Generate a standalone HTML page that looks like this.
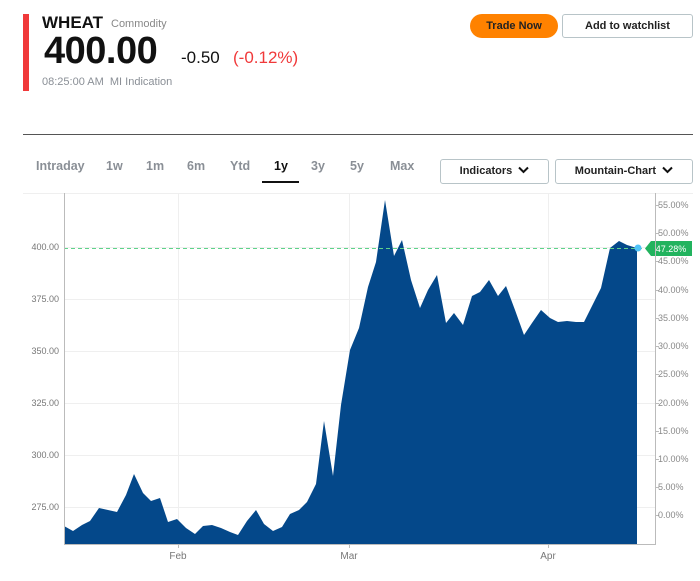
<!DOCTYPE html>
<html><head><style>
body{margin:0;width:700px;height:581px;background:#fff;font-family:"Liberation Sans",sans-serif;position:relative;overflow:hidden}
.a{position:absolute;white-space:nowrap}
.btn{position:absolute;box-sizing:border-box;font-size:11px;font-weight:bold;color:#222;text-align:center}
.tab{position:absolute;top:159px;font-size:12.5px;font-weight:bold;color:#8a8f96}
</style></head><body>
<div class="a" style="left:23px;top:14px;width:6px;height:77px;background:#f0393a"></div>
<div class="a" style="left:42px;top:13px;font-size:17px;font-weight:bold;color:#111">WHEAT</div>
<div class="a" style="left:111px;top:18px;font-size:11px;color:#888">Commodity</div>
<div class="a" style="left:44px;top:30px;font-size:38px;font-weight:bold;color:#111;letter-spacing:-0.5px">400.00</div>
<div class="a" style="left:181px;top:48px;font-size:17px;color:#111">-0.50</div>
<div class="a" style="left:233px;top:48px;font-size:17px;color:#f0393a">(-0.12%)</div>
<div class="a" style="left:42px;top:76px;font-size:11px;color:#8a8f96">08:25:00 AM&nbsp;&nbsp;MI Indication</div>
<div class="btn" style="left:470px;top:14px;width:88px;height:24px;border-radius:12px;background:#ff8200;line-height:24px">Trade Now</div>
<div class="btn" style="left:562px;top:14px;width:131px;height:24px;border:1px solid #b8c4c8;border-radius:3px;line-height:22px">Add to watchlist</div>
<div class="a" style="left:23px;top:134px;width:670px;height:1px;background:#555"></div>
<div class="tab" style="left:36px">Intraday</div>
<div class="tab" style="left:106px">1w</div>
<div class="tab" style="left:146px">1m</div>
<div class="tab" style="left:187px">6m</div>
<div class="tab" style="left:230px">Ytd</div>
<div class="tab" style="left:274px;color:#111">1y</div>
<div class="a" style="left:262px;top:181px;width:37px;height:2px;background:#111"></div>
<div class="tab" style="left:311px">3y</div>
<div class="tab" style="left:350px">5y</div>
<div class="tab" style="left:390px">Max</div>
<div class="btn" style="left:440px;top:159px;width:109px;height:25px;border:1px solid #b8c4c8;border-radius:3px;line-height:23px">Indicators &nbsp;<svg width="11" height="8" viewBox="0 0 11 8"><path d="M1 1.5L5.5 6 10 1.5" stroke="#111" stroke-width="2" fill="none"/></svg></div>
<div class="btn" style="left:555px;top:159px;width:138px;height:25px;border:1px solid #b8c4c8;border-radius:3px;line-height:23px">Mountain-Chart &nbsp;<svg width="11" height="8" viewBox="0 0 11 8"><path d="M1 1.5L5.5 6 10 1.5" stroke="#111" stroke-width="2" fill="none"/></svg></div>
<svg class="a" style="left:0;top:0" width="700" height="581">
<g stroke="#efefef" stroke-width="1">
<line x1="23" y1="193.5" x2="693" y2="193.5"/>
<line x1="64" y1="247.5" x2="655" y2="247.5"/><line x1="64" y1="299.5" x2="655" y2="299.5"/><line x1="64" y1="351.5" x2="655" y2="351.5"/><line x1="64" y1="403.5" x2="655" y2="403.5"/><line x1="64" y1="455.5" x2="655" y2="455.5"/><line x1="64" y1="507.5" x2="655" y2="507.5"/>
<line x1="178.5" y1="193" x2="178.5" y2="544"/><line x1="349.5" y1="193" x2="349.5" y2="544"/><line x1="548.5" y1="193" x2="548.5" y2="544"/>
</g>
<polygon fill="#04488a" points="64,544 64,526 73,531 82,525 90,521 99,508 108,510 117,512 126,495 134,474 143,493 151,501 160,498 168,522 177,519 186,528 195,534 203,526 212,525 221,528 230,532 238,535 247,521 256,510 264,524 273,531 282,527 290,514 299,510 307,502 316,484 324,421 333,476 341,405 350,350 359,328 368,287 376,262 385,200 394,256 402,240 411,280 420,308 428,290 437,275 446,323 454,313 463,325 472,296 480,292 489,280 498,296 506,286 515,310 524,335 532,323 541,310 550,318 558,322 567,321 576,322 584,322 593,304 601,288 610,248 619,241 627,245 637,248 637,544"/>
<line x1="64" y1="248.5" x2="645" y2="248.5" stroke="#5fd38a" stroke-dasharray="4,3"/>
<circle cx="638" cy="248" r="3.5" fill="#4fc3f7"/>
<polygon points="645,248.5 651,241 692,241 692,256 651,256" fill="#22b35e"/>
<text x="671" y="252" font-size="9" fill="#fff" text-anchor="middle" font-family="Liberation Sans">47.28%</text>
<line x1="64.5" y1="193" x2="64.5" y2="545" stroke="#bbb"/>
<line x1="655.5" y1="193" x2="655.5" y2="545" stroke="#bbb"/>
<line x1="64" y1="544.5" x2="656" y2="544.5" stroke="#bbb"/>
<g stroke="#bbb"><line x1="655" y1="205.5" x2="659" y2="205.5"/><line x1="655" y1="233.5" x2="659" y2="233.5"/><line x1="655" y1="261.5" x2="659" y2="261.5"/><line x1="655" y1="290.5" x2="659" y2="290.5"/><line x1="655" y1="318.5" x2="659" y2="318.5"/><line x1="655" y1="346.5" x2="659" y2="346.5"/><line x1="655" y1="374.5" x2="659" y2="374.5"/><line x1="655" y1="403.5" x2="659" y2="403.5"/><line x1="655" y1="431.5" x2="659" y2="431.5"/><line x1="655" y1="459.5" x2="659" y2="459.5"/><line x1="655" y1="487.5" x2="659" y2="487.5"/><line x1="655" y1="515.5" x2="659" y2="515.5"/>
<line x1="178.5" y1="544" x2="178.5" y2="548"/><line x1="349.5" y1="544" x2="349.5" y2="548"/><line x1="548.5" y1="544" x2="548.5" y2="548"/></g>
<g font-size="9" fill="#777" font-family="Liberation Sans" text-anchor="end">
<text x="59" y="250">400.00</text><text x="59" y="302">375.00</text><text x="59" y="354">350.00</text><text x="59" y="406">325.00</text><text x="59" y="458">300.00</text><text x="59" y="510">275.00</text>
</g>
<g font-size="9" fill="#888" font-family="Liberation Sans">
<text x="658" y="208">55.00%</text><text x="658" y="236">50.00%</text><text x="658" y="264">45.00%</text><text x="658" y="293">40.00%</text><text x="658" y="321">35.00%</text><text x="658" y="349">30.00%</text><text x="658" y="377">25.00%</text><text x="658" y="406">20.00%</text><text x="658" y="434">15.00%</text><text x="658" y="462">10.00%</text><text x="658" y="490">5.00%</text><text x="658" y="518">0.00%</text>
</g>
<g font-size="10" fill="#777" font-family="Liberation Sans" text-anchor="middle">
<text x="178" y="559">Feb</text><text x="349" y="559">Mar</text><text x="548" y="559">Apr</text>
</g>
</svg>
</body></html>
